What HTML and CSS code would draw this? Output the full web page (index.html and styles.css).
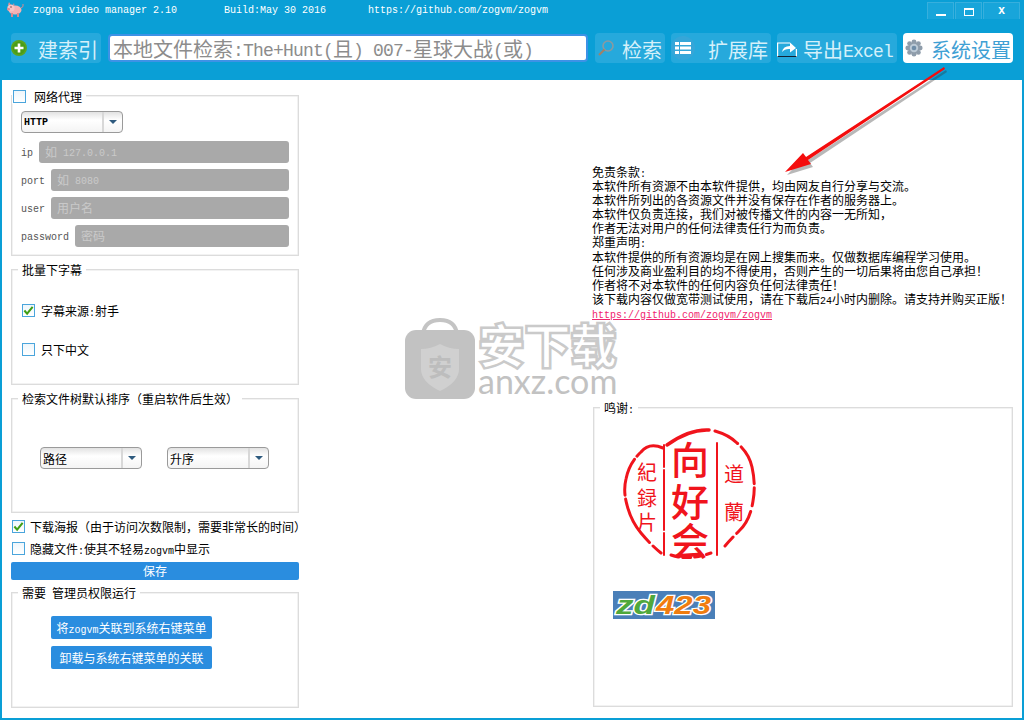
FILE: index.html
```html
<!DOCTYPE html>
<html lang="zh">
<head>
<meta charset="utf-8">
<title>zogna video manager</title>
<link rel="stylesheet" href="styles.css">
</head>
<body>
<div class="window">
  <header class="head">
    <div class="titlebar">
      <svg class="pig" width="17" height="15" viewBox="0 0 17 15"><ellipse cx="8" cy="8" rx="6.5" ry="4.6" fill="#f3b2b4"/><circle cx="4" cy="6" r="3.6" fill="#f7c4c4"/><path d="M1 3 2 0 4 3M6 3 7 1 7.500 4" fill="#e58f96"/><rect x="0" y="6" width="3" height="2.500" rx="1" fill="#e98b93"/><rect x="4" y="11" width="2" height="4" fill="#d98890"/><rect x="10" y="11" width="2" height="4" fill="#d98890"/><path d="M14 6q3-1 2-4" stroke="#d98890" fill="none"/><circle cx="4" cy="5" r=".7" fill="#533"/></svg>
      <span class="t-name lat">zogna video manager 2.10</span>
      <span class="t-build lat">Build:May 30 2016</span>
      <span class="t-url lat">https://github.com/zogvm/zogvm</span>
      <div class="winctl">
        <span class="wbtn w-min"><i class="minbar"></i></span>
        <span class="wbtn w-max"><i class="maxbox"></i></span>
        <span class="wbtn w-close">x</span>
      </div>
    </div>
    <div class="toolbar">
      <div class="tool t-index">
        <svg width="16" height="16" viewBox="0 0 16 16"><circle cx="8" cy="8" r="8" fill="#5aa51f"/><circle cx="8" cy="8" r="6.300" fill="#4a9c18"/><path d="M8 3.500v9M3.500 8h9" stroke="#fff" stroke-width="2.600"/></svg>
        <span class="tool-label">建索引</span>
      </div>
      <div class="search">本地文件检索<span class="lat-lg">:The+Hunt(</span>且<span class="lat-lg">) 007-</span>星球大战<span class="lat-lg">(</span>或<span class="lat-lg">)</span></div>
      <div class="tool t-find">
        <svg width="18" height="18" viewBox="0 0 18 18"><circle cx="11" cy="7" r="5" fill="none" stroke="#8a9aa0" stroke-width="1.600"/><path d="M7.500 10.500 2 16" stroke="#a08068" stroke-width="2.200"/></svg>
        <span class="tool-label">检索</span>
      </div>
      <div class="tool t-ext">
        <span class="listwrap"><svg width="16" height="12" viewBox="0 0 16 12"><path d="M0 0h4v3H0zM5 0h11v3H5zM0 4.500h4v3H0zM5 4.500h11v3H5zM0 9h4v3H0zM5 9h11v3H5z" fill="#fff"/></svg></span>
        <span class="tool-label">扩展库</span>
      </div>
      <div class="tool t-excel">
        <svg width="20" height="20" viewBox="0 0 20 20"><path d="M13 5H.6v13.500h18.800V11" fill="none" stroke="#fff" stroke-width="1.200"/><path d="M.5 18.500h19" stroke="#123" stroke-width="1"/><path d="M5 14q1-6 8-6V4.500l6 5.500-6 4.500V11q-5-.5-8 3z" fill="#fff"/></svg>
        <span class="tool-label">导出<span class="lat-lg">Excel</span></span>
      </div>
      <div class="tool t-settings">
        <svg width="18" height="18" viewBox="0 0 18 18"><g fill="#8f9dab"><circle cx="9" cy="2.800" r="2.400"/><circle cx="13.400" cy="4.600" r="2.400"/><circle cx="15.200" cy="9" r="2.400"/><circle cx="13.400" cy="13.400" r="2.400"/><circle cx="9" cy="15.200" r="2.400"/><circle cx="4.600" cy="13.400" r="2.400"/><circle cx="2.800" cy="9" r="2.400"/><circle cx="4.600" cy="4.600" r="2.400"/><circle cx="9" cy="9" r="6"/></g><circle cx="9" cy="9" r="4.200" fill="#bccad6"/><circle cx="9" cy="9" r="2.300" fill="#6f8da8"/></svg>
        <span class="tool-label">系统设置</span>
      </div>
    </div>
  </header>

  <main class="content">
    <section class="leftcol">
      <div class="group g-proxy">
        <label class="legend legend-check"><span class="check"></span><span class="legend-text">网络代理</span></label>
        <div class="select s-http"><span class="s-val lat-b">HTTP</span><span class="s-arrow"></span></div>
        <div class="field"><span class="lat f-label">ip</span><div class="f-input">如<span class="lat ph"> 127.0.0.1</span></div></div>
        <div class="field"><span class="lat f-label">port</span><div class="f-input">如<span class="lat ph"> 8080</span></div></div>
        <div class="field"><span class="lat f-label">user</span><div class="f-input">用户名</div></div>
        <div class="field"><span class="lat f-label">password</span><div class="f-input">密码</div></div>
      </div>

      <div class="group g-subs">
        <span class="legend">批量下字幕</span>
        <div class="checkrow"><span class="check checked"><svg width="12" height="11" viewBox="0 0 12 11"><path d="M1.500 5.500 4.500 9 10.500 1.500" fill="none" stroke="#3f9e14" stroke-width="2.200"/></svg></span><span>字幕来源<span class="lat">:</span>射手</span></div>
        <div class="checkrow"><span class="check"></span><span>只下中文</span></div>
      </div>

      <div class="group g-sort">
        <span class="legend">检索文件树默认排序&#xFF08;重启软件后生效&#xFF09;</span>
        <div class="selects">
          <div class="select s-sort"><span class="s-val">路径</span><span class="s-arrow"></span></div>
          <div class="select s-sort"><span class="s-val">升序</span><span class="s-arrow"></span></div>
        </div>
      </div>

      <div class="checkrow plain first"><span class="check checked"><svg width="12" height="11" viewBox="0 0 12 11"><path d="M1.500 5.500 4.500 9 10.500 1.500" fill="none" stroke="#3f9e14" stroke-width="2.200"/></svg></span><span>下载海报&#xFF08;由于访问次数限制&#xFF0C;需要非常长的时间&#xFF09;</span></div>
      <div class="checkrow plain"><span class="check"></span><span>隐藏文件<span class="lat">:</span>使其不轻易<span class="lat">zogvm</span>中显示</span></div>
      <div class="btn save">保存</div>

      <div class="group g-admin">
        <span class="legend">需要<span class="lat"> </span>管理员权限运行</span>
        <div class="btn assoc">将<span class="lat">zogvm</span>关联到系统右键菜单</div>
        <div class="btn assoc">卸载与系统右键菜单的关联</div>
      </div>
    </section>

    <section class="rightcol">
      <p class="notice">免责条款<span class="lat">:</span><br>本软件所有资源不由本软件提供&#xFF0C;均由网友自行分享与交流。<br>本软件所列出的各资源文件并没有保存在作者的服务器上。<br>本软件仅负责连接&#xFF0C;我们对被传播文件的内容一无所知&#xFF0C;<br>作者无法对用户的任何法律责任行为而负责。<br>郑重声明<span class="lat">:</span><br>本软件提供的所有资源均是在网上搜集而来。仅做数据库编程学习使用。<br>任何涉及商业盈利目的均不得使用&#xFF0C;否则产生的一切后果将由您自己承担&#xFF01;<br>作者将不对本软件的任何内容负任何法律责任&#xFF01;<br>该下载内容仅做宽带测试使用&#xFF0C;请在下载后<span class="lat">24</span>小时内删除。请支持并购买正版&#xFF01;<br><a class="link lat" href="#">https://github.com/zogvm/zogvm</a></p>

      <div class="group g-thanks">
        <span class="legend">鸣谢<span class="lat">:</span></span>
        <svg class="seal" width="132" height="134" viewBox="0 0 132 134">
          <g fill="none" stroke="#f0141c" stroke-width="3" stroke-linecap="round">
            <path d="M44 18q22-16 42-15" stroke-width="3.500"/>
            <path d="M92 4q14 4 22 12 12 10 15 24 4 18 1 34-3 20-14 30-8 8-14 15" stroke-dasharray="26 5 40 4 18 6"/>
            <path d="M40 21q-14-6-22 4Q6 36 3 52q-3 12 1 26 4 16 14 28 10 12 20 20" stroke-dasharray="30 4 38 4 50 5"/>
            <path d="M41 18v112" stroke-width="2" stroke-dasharray="22 3 60 3"/>
            <path d="M94 16v112" stroke-width="2"/>
            <path d="M48 128q18 6 40-2" stroke-dasharray="8 4"/>
          </g>
          <g class="seal-text">
            <text x="67" y="47" class="sl">向</text>
            <text x="67" y="89" class="sl">好</text>
            <text x="67" y="128" class="sl">会</text>
            <text x="24" y="53" class="sm">紀</text>
            <text x="24" y="79" class="sm">録</text>
            <text x="24" y="103" class="sm">片</text>
            <text x="111" y="55" class="sm">道</text>
            <text x="111" y="93" class="sm">蘭</text>
          </g>
        </svg>
        <svg class="zd" width="102" height="28" viewBox="0 0 102 28">
          <rect width="102" height="28" fill="#4a7fb8"/>
          <text x="3" y="23" class="zd-t zd-g" textLength="39" lengthAdjust="spacingAndGlyphs">zd</text>
          <text x="43" y="23" class="zd-t zd-o" textLength="55" lengthAdjust="spacingAndGlyphs">423</text>
        </svg>
      </div>
    </section>

    <div class="watermark">
      <svg class="wm-icon" width="72" height="82" viewBox="0 0 72 82">
        <path d="M19 16q2-14 17-14t17 14" fill="none" stroke="#c4c4c4" stroke-width="4"/>
        <rect x="1" y="12" width="70" height="69" rx="11" fill="#c2c2c2"/>
        <path d="M36 26q9 5 19 5v20q0 13-19 22-19-9-19-22V31q10 0 19-5z" fill="#d0d0d0"/>
        <text x="36" y="58" class="wm-an">安</text>
      </svg>
      <div class="wm-text">
        <div class="wm-cn">安下载</div>
        <div class="wm-en">anxz.com</div>
      </div>
    </div>
  </main>

  <svg class="arrow" width="1024" height="720" viewBox="0 0 1024 720">
    <g transform="translate(2 3)" opacity=".35"><path d="M944 67 806 157 803 153 785 172 811 164 808 160 945 69z" fill="#333"/></g>
    <path d="M944 67 806 157 803 153 785 172 811 164 808 160 945 69z" fill="#f40d0d"/>
  </svg>
</div>
</body>
</html>
```

FILE: styles.css
```css
* { box-sizing: border-box; }
html, body { margin: 0; padding: 0; }
body {
  width: 1024px;
  height: 720px;
  overflow: hidden;
  font-family: "Noto Sans CJK SC", sans-serif;
  font-size: 12px;
  color: #000;
}
.lat { font-family: "Liberation Mono", monospace; font-size: 10px; line-height: 0; }
.lat-b { font-family: "Liberation Mono", monospace; font-size: 10px; font-weight: bold; }
.lat-lg { font-family: "Liberation Mono", monospace; font-size: 18px; letter-spacing: -0.8px; line-height: 0; vertical-align: 1px; }
.ph { vertical-align: 1px; }

.window {
  position: relative;
  width: 1024px;
  height: 720px;
  background: #0a9fd6;
  padding: 0 2px 2px;
}
.head { height: 80px; }

.titlebar {
  height: 33px;
  display: flex;
  align-items: flex-start;
  color: #fff;
  padding-left: 5px;
}
.pig { margin-top: 2px; }
.t-name, .t-build, .t-url { line-height: 20px; margin-top: 1px; }
.t-name { margin-left: 9px; width: 191px; }
.t-build { width: 144px; }
.winctl { margin-left: auto; margin-right: 2px; margin-top: 2px; display: flex; gap: 1px; }
.wbtn {
  height: 17px;
  display: flex;
  justify-content: center;
  align-items: center;
  background: #18a5da;
  border: 1px solid #37afdd;
  border-bottom: 0;
  color: #fff;
}
.w-min, .w-max { width: 27px; }
.w-close { width: 37px; padding-bottom: 2px; font: bold 12px "Liberation Sans", sans-serif; }
.minbar { display: block; width: 10px; height: 2px; background: #fff; margin-top: 8px; }
.maxbox { display: block; width: 10px; height: 8px; border: 1px solid #fff; border-top-width: 2px; margin-top: 2px; }

.toolbar { display: flex; align-items: center; height: 30px; padding-left: 9px; gap: 6px; }
.tool {
  height: 30px;
  display: flex;
  align-items: center;
  justify-content: space-between;
  border-radius: 4px;
  background: #26a9dc;
  color: #d4f0fa;
  font-size: 20px;
  line-height: 30px;
  white-space: nowrap;
}
.tool-label { padding-top: 3px; }
.t-index { width: 90px; padding: 0 3px 0 0; }
.t-find { width: 70px; padding: 0 3px 0 2px; }
.t-ext { width: 100px; padding: 0 3px 0 0; }
.t-excel { width: 120px; padding: 0 4px 0 0; }
.t-settings { width: 110px; padding: 0 2px 0 2px; background: #fff; color: #3fa0d4; }
.listwrap { width: 24px; height: 24px; margin-left: 0; border-radius: 50%; background: #36a6d8; display: flex; align-items: center; justify-content: center; }

.search {
  width: 480px;
  height: 28px;
  margin: 0 1px;
  padding-left: 3px;
  border: 2px solid #3d92e6;
  border-radius: 4px;
  background: #fff;
  color: #8c8c8c;
  font-size: 20px;
  line-height: 26px;
  white-space: nowrap;
  overflow: hidden;
}

.content {
  position: relative;
  display: flex;
  height: 638px;
  background: #fff;
}
.leftcol { width: 288px; margin-left: 9px; padding-top: 15px; }
.rightcol { width: 422px; margin-left: 293px; padding-top: 85px; }

.group {
  position: relative;
  border: 1px solid #dcdcdc;
  box-shadow: inset 0 0 0 .5px #e6e6e6;
}
.legend {
  position: absolute;
  top: -8px;
  left: 6px;
  padding: 0 4px;
  background: #fff;
  line-height: 15px;
  white-space: nowrap;
}
.legend-check { left: 0; top: -7px; display: flex; align-items: center; padding: 0 4px 0 1px; }
.legend-text { margin-left: 8px; }

.check {
  flex: none;
  width: 13px;
  height: 13px;
  border: 1px solid #4aa5dc;
  background: linear-gradient(#eef6fb, #fff);
  display: inline-flex;
  align-items: center;
  justify-content: center;
}
.legend-check .check { margin-top: -1px; }

.g-proxy { height: 161px; padding: 15px 9px 0 9px; }
.select {
  height: 22px;
  display: flex;
  border: 1px solid #9a9a9a;
  border-radius: 4px;
  background: linear-gradient(#e2e2e2, #fff 40%, #f4f4f4);
  line-height: 21px;
}
.s-val { flex: 1; padding-left: 2px; border-right: 2px solid #d8d8d8; }
.s-val.lat-b { line-height: 22px; }
.s-arrow {
  width: 18px;
  position: relative;
}
.s-arrow::after {
  content: "";
  position: absolute;
  left: 5px;
  top: 8px;
  border: 4px solid transparent;
  border-top: 4px solid #2e5a7e;
  border-bottom: 0;
}
.s-http { width: 102px; margin-bottom: 8px; }
.field { display: flex; height: 22px; margin-bottom: 6px; align-items: center; }
.f-label { color: #555; margin-right: 6px; padding-top: 3px; line-height: 22px; }
.f-input {
  flex: 1;
  height: 22px;
  padding-left: 6px;
  background: #a9a9a9;
  border-radius: 3px;
  color: #c9c9c9;
  line-height: 22px;
}

.g-subs { height: 116px; margin-top: 13px; padding: 32px 10px 0 10px; }
.checkrow { display: flex; align-items: center; height: 16px; white-space: nowrap; }
.checkrow .check { margin-right: 6px; }
.g-subs .checkrow { margin-bottom: 23px; }

.g-sort { height: 115px; margin-top: 13px; padding: 48px 0 0 28px; }
.selects { display: flex; gap: 25px; }
.s-sort { width: 102px; height: 22px; }

.plain { padding-left: 1px; margin-top: 6px; height: 16px; }
.plain.first { margin-top: 5px; }
.plain .check { margin-right: 5px; }

.btn {
  background: #2a8ddf;
  color: #fff;
  text-align: center;
  border-radius: 2px;
}
.save { height: 18px; line-height: 18px; margin-top: 6px; }
.g-admin { height: 116px; margin-top: 12px; padding: 23px 0 0 39px; }
.assoc { width: 161px; height: 23px; line-height: 23px; margin-bottom: 7px; }

.notice { margin: 0; line-height: 14.1px; white-space: nowrap; }
.link { color: #f0246e; text-decoration: underline; }

.g-thanks { width: 420px; height: 300px; margin-top: 87px; margin-left: 1px; padding: 19px 0 0 29px; }
.seal, .zd { display: block; overflow: visible; }
.zd { margin: 30px 0 0 -10px; }
.seal-text text { fill: #f0141c; text-anchor: middle; font-family: "Noto Sans CJK TC", sans-serif; }
.seal-text .sl { font-size: 38px; font-weight: 500; }
.seal-text .sm { font-size: 20px; }
.zd-t { font: italic bold 26px "Liberation Sans", sans-serif; stroke: #fff; stroke-width: 2.5px; paint-order: stroke; }
.zd-g { fill: #4fa83c; }
.zd-o { fill: #f07d10; }

.watermark {
  position: absolute;
  left: 402px;
  top: 238px;
  display: flex;
  gap: 2px;
  pointer-events: none;
}
.wm-icon { display: block; }
.wm-an { text-anchor: middle; fill: #bdbdbd; font-size: 24px; font-weight: bold; }
.wm-text { width: 142px; }
.wm-cn {
  font-size: 47px;
  font-weight: 900;
  line-height: 50px;
  letter-spacing: -1px;
  color: #fff;
  -webkit-text-stroke: 2.5px #cacaca;
  white-space: nowrap;
}
.wm-en {
  font-family: "Lato", sans-serif;
  font-size: 34px;
  line-height: 26px;
  color: #c2c2c2;
}

.arrow { position: absolute; left: 0; top: 0; pointer-events: none; }
```
